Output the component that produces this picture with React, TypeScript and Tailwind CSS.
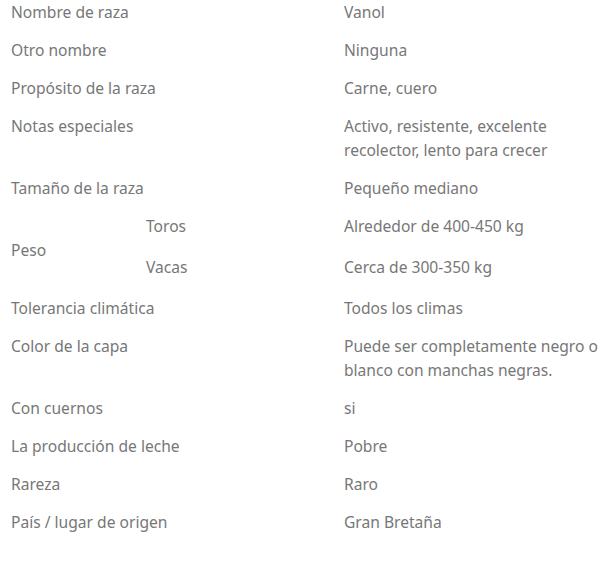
const rows: [string, string][] = [
  ['Nombre de raza', 'Vanol'],
  ['Otro nombre', 'Ninguna'],
  ['Propósito de la raza', 'Carne, cuero'],
  ['Notas especiales', 'Activo, resistente, excelente recolector, lento para crecer'],
  ['Tamaño de la raza', 'Pequeño mediano'],
]

const rest: [string, string][] = [
  ['Tolerancia climática', 'Todos los climas'],
  ['Color de la capa', 'Puede ser completamente negro o blanco con manchas negras.'],
  ['Con cuernos', 'si'],
  ['La producción de leche', 'Pobre'],
  ['Rareza', 'Raro'],
  ['País / lugar de origen', 'Gran Bretaña'],
]

function Row({ label, value }: { label: string; value: string }) {
  return (
    <>
      <div className="col-span-2 py-[7px] pl-[11px]">{label}</div>
      <div className="py-[7px] pl-[11px] pr-[2px]">{value}</div>
    </>
  )
}

export default function App() {
  return (
    <div className="w-[609px] h-[564px] bg-white overflow-hidden">
      <div
        className="-mt-[7px] grid grid-cols-[135px_198px_1fr] text-[15.6px] leading-[24px] text-[#777]"
        style={{ fontFamily: '"Noto Sans", sans-serif' }}
      >
        {rows.map(([l, v]) => (
          <Row key={l} label={l} value={v} />
        ))}
        <div className="row-span-2 flex items-center pl-[11px] pt-[6px]">Peso</div>
        <div className="py-[7px] pl-[11px]">Toros</div>
        <div className="py-[7px] pl-[11px]">Alrededor de 400-450 kg</div>
        <div className="pt-[10px] pb-[7px] pl-[11px]">Vacas</div>
        <div className="pt-[10px] pb-[7px] pl-[11px]">Cerca de 300-350 kg</div>
        <div className="col-span-3 h-[3px]" />
        {rest.map(([l, v]) => (
          <Row key={l} label={l} value={v} />
        ))}
      </div>
    </div>
  )
}
